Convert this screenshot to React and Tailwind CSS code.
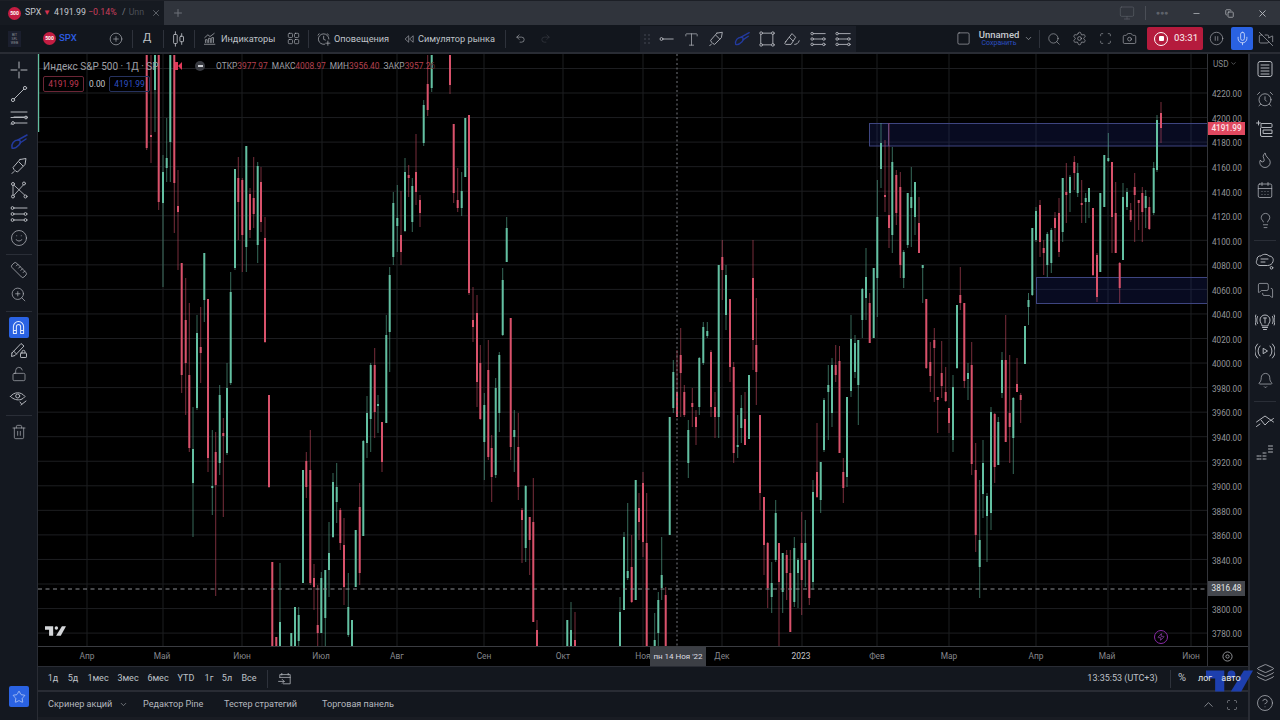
import React from "react";
import { CirclePlus, Undo2, Redo2, Type, Square, Search, Settings, Scan, Camera, Mic, VideoOff, CirclePause, ChevronDown, ChevronUp, Smile, Ruler, ZoomIn, LockOpen, Trash2, Star, AlarmClock, Flame, CalendarDays, Lightbulb, MessagesSquare, Bell, Layers, CircleHelp, Minus, X, Copy, Plus, Monitor, Zap } from "lucide-react";

const G = "g", R = "r";
const CANDLES = [
[146.7,R,55,55,148,150],[151,R,55,135,137,163],[155,G,55,55,90,132],[158.7,R,55,55,202,210],[163,G,155,172,203,287],[166.7,G,118,158,168,182],[170.3,G,55,55,142,182],[174.3,R,55,55,183,233],[178,R,170,206,212,270],[181.7,R,263,263,375,393],[185.7,R,278,320,363,415],[189.3,R,303,375,448,452],[193,G,407,449,483,537],[197,G,315,333,408,410],[200.7,R,307,347,353,383],[204.3,G,253,253,300,322],[208,R,299,299,458,472],[212.3,G,430,486,487,515],[215.7,R,432,452,485,596],[219.7,G,385,395,463,475],[223.3,R,418,433,436,517],[227,G,363,388,453,455],[230.7,G,272,292,383,385],
[235,G,169,169,268,270],[238.3,R,157,178,202,240],[242.3,R,178,180,235,272],[246.3,G,146,146,247,272],[250,R,188,194,230,238],[253.7,R,157,198,214,228],[257.7,G,162,166,245,263],[261,R,167,182,222,232],[265,R,217,238,342,343],[269,R,395,395,487,488],[272.3,R,562,562,646,646],[276.3,R,637,637,646,646],[280,G,563,622,646,646],[291.3,G,633,633,646,646],[295,G,607,607,646,646],[298.7,G,607,615,641,646],[303,G,470,470,583,583],[306.3,R,452,461,487,498],[310.3,R,430,470,583,585],[314,R,564,578,587,610],[317.7,R,585,625,633,646],[321.3,G,572,578,633,633],[325.3,G,570,570,618,646],[329,G,522,553,570,597],[333,G,473,482,537,538],[336.7,G,463,487,502,523],[340.3,R,508,510,543,550],[344,R,518,545,587,605],[348.3,G,573,607,635,637],[352,G,620,620,646,646],[355.7,G,530,530,587,587],[359.7,R,483,507,573,585],[363.3,G,440,441,536,536],[367,G,396,413,443,458],[370.7,G,363,365,419,452],[374.7,R,348,365,412,438],[378,G,395,404,406,433],[382,R,422,422,462,472],[386.3,G,315,335,423,423],[389.7,G,267,275,332,372],
[393.3,G,192,203,257,265],[397.3,G,185,218,226,252],[401,R,191,235,252,265],[405,G,158,172,231,232],[408.7,R,165,175,178,197],[412.3,G,178,186,222,232],[416,R,134,172,192,205],[420,R,195,200,213,227],[423.7,G,100,105,143,146],[427.7,R,55,84,110,116],[431.7,G,55,55,88,92],[450,R,55,55,85,94],[453.7,R,124,124,193,203],[457.7,R,168,200,208,212],[461.7,G,172,191,208,216],[465.3,G,118,118,177,177],[469,R,115,115,293,295],[473,R,287,320,327,342],[477,R,295,313,382,407],[480.3,R,345,363,419,420],[484.3,G,393,405,442,480],[488.3,R,340,370,457,460],[491.7,R,435,448,477,502],[495.7,G,378,388,475,478],[499.3,G,352,355,413,432],[502.7,G,268,280,335,336],[506.7,G,217,228,262,262],[510.7,R,318,318,447,460],[514.3,G,410,430,437,472],[518.3,R,413,447,487,500],[522,R,508,510,520,563],[525.7,G,485,486,548,562],[529.7,R,517,517,540,575],[533.3,R,478,522,622,622],[537,R,620,630,646,646],[567.3,G,620,620,646,646],[571,G,602,630,646,646],[575,R,612,640,646,646],[620,G,597,612,646,646],[624,G,532,537,610,610],[627.7,G,503,571,578,580],[631.7,R,535,567,602,603],[635.7,G,480,480,600,600],[639,R,493,508,522,540],[643,R,472,483,542,557],[646.7,R,493,543,646,646],[654.7,G,613,640,646,646],[658.3,G,592,600,633,646],[661.7,G,537,575,588,600],[665.7,R,587,595,646,646],[669.7,G,417,417,535,535],[673.3,G,360,372,408,413],[677,R,350,392,417,417],[680.7,R,328,355,373,417],[684.3,R,385,392,415,417],[688.3,G,420,430,463,478],[692.3,R,388,403,407,427],[696,R,410,417,427,445],[699.3,G,357,358,407,415],[703.3,G,322,327,363,365],[707.3,G,322,331,336,338],[711,R,350,352,407,417],[715,R,392,407,417,438],[718.7,G,265,265,417,438],[722.3,R,240,257,270,300],[726,G,265,275,315,330],[730,R,299,299,367,382],[733.7,R,362,367,453,463],[737.7,G,415,445,447,458],[741.3,G,395,408,428,443],[745,R,392,419,445,445],[749,G,375,375,439,439],[753,R,240,278,340,370],[756.3,R,298,345,372,405],[760,R,415,415,493,510],[764,R,497,497,545,575],[767.7,R,542,543,588,608],[771.7,G,562,583,597,613],[775.7,G,500,513,560,562],[779,R,543,543,582,646],[782.7,G,553,553,592,613],[786.7,R,550,555,573,600],[790.3,R,550,573,632,632],[794.3,G,537,548,602,607],[798,G,558,560,573,608],[801.7,R,512,543,580,615],[805.3,G,520,543,560,587],[809.3,R,560,560,598,605],[813,G,480,492,582,590],[817,R,423,472,497,498],[820.7,G,462,462,500,513],[824,G,398,400,450,452],[828.3,G,365,385,392,440],[832,G,358,365,413,427],[835.7,R,345,365,375,382],[839.5,R,346,361,453,453],[843.3,R,458,472,488,503],[847,G,397,397,477,487],[851,G,315,339,391,397],[855,G,335,343,372,378],[858.3,G,340,340,385,425],[862.3,G,288,289,320,338],[866,G,248,277,298,320],[869.7,R,293,303,343,343],[873.7,G,268,268,338,338],[877.3,G,180,217,278,317],[881,G,123,143,169,188],[885,R,140,195,197,212],[889,R,123,215,228,248],[892.3,G,147,162,235,253],[896.3,R,170,175,213,225],[900.3,R,172,187,265,278],[903.7,G,250,252,278,288],[907.7,G,193,193,245,248],[911.3,G,167,197,208,247],[915,G,182,182,217,235],[919,R,197,223,253,253],[922.7,G,265,265,268,303],[926.3,R,299,299,368,369],[930.3,R,342,362,376,392],[934.3,R,328,340,348,402],[937.7,R,397,397,400,433],[941.7,R,341,373,386,398],[945.7,R,367,392,401,402],[949,R,408,408,423,433],[953,G,375,387,440,452],[957,G,305,305,368,369],[960.3,R,267,295,303,310],[964.3,R,303,303,381,388],[968,G,363,373,379,400],[971.7,R,342,365,464,475],[975.7,R,443,470,535,552],[979.7,G,480,540,567,598],[983,G,440,463,494,518],[987,G,493,496,516,562],[991,G,407,412,513,530],[994.7,R,413,414,467,483],[998.3,G,417,422,465,465],[1002,G,352,360,393,398],[1005.7,R,315,360,442,442],[1009.7,R,355,413,427,463],[1013.3,G,397,398,438,474],[1017,R,358,384,392,392],[1020.7,R,393,395,400,423],[1025,G,326,326,364,364],[1028.5,G,293,300,307,325],[1032.3,G,228,228,295,296],[1036,G,207,211,240,242],[1040,R,200,205,242,257],[1043.7,R,240,248,253,275],[1047.3,G,232,234,265,277],[1051.3,G,228,230,263,273],[1055,R,212,218,228,242],[1059,R,198,213,252,257],[1062.7,G,178,178,232,242],[1066.3,R,163,192,195,223],[1070,G,175,177,193,212],[1074.3,R,156,162,173,190],[1077.7,G,163,173,193,197],[1081.7,R,180,203,205,223],[1085.7,G,193,198,202,223],[1089,G,188,188,202,218],[1093,R,208,208,275,276],[1097,R,253,255,297,302],[1100.3,G,193,193,272,272],[1104.3,G,155,155,207,207],[1108.3,G,133,158,161,162],[1112,R,162,162,217,253],[1115.7,R,182,213,253,253],[1119.7,R,262,263,288,303],[1123,G,183,197,260,260],[1127,G,188,192,207,210],[1130.7,R,203,210,220,222],[1134.7,R,173,187,195,242],[1138.7,R,200,200,203,230],[1142.3,R,187,193,212,242],[1145.7,G,190,196,208,228],[1149.3,R,197,207,229,230],[1153.7,G,162,168,213,215],[1157,G,115,120,170,172],[1161,R,102,113,128,143],
];

const VLINES = [87, 163, 242, 322, 397, 484, 563, 643, 722, 802, 877, 949, 1036, 1108, 1191];
const PRICES = ["4220.00","4200.00","4180.00","4160.00","4140.00","4120.00","4100.00","4080.00","4060.00","4040.00","4020.00","4000.00","3980.00","3960.00","3940.00","3920.00","3900.00","3880.00","3860.00","3840.00","","3800.00","3780.00"];
const MONTHS = [["Апр",87],["Май",162],["Июн",242],["Июл",321],["Авг",397],["Сен",484],["Окт",563],["Ноя",643],["Дек",722],["2023",801],["Фев",877],["Мар",949],["Апр",1036],["Май",1107],["Июн",1191]];
const RANGES = [["1д",53],["5д",73],["1мес",98],["3мес",128],["6мес",158],["YTD",186],["1г",209],["5л",227],["Все",249]];

const ico = "#b3b6bc";

function Svg({ size = 20, color = ico, w = 1, children }) {
  return <svg width={size} height={size} viewBox="0 0 20 20" fill="none" stroke={color} strokeWidth={w} strokeLinecap="round" strokeLinejoin="round">{children}</svg>;
}
const Crosshair = () => <Svg><path d="M10 2v6M10 12v6M2 10h6M12 10h6" /></Svg>;
const TrendLine = ({ size }) => <Svg size={size}><circle cx="4" cy="16" r="1.6" /><circle cx="16" cy="4" r="1.6" /><path d="M5.2 14.8 14.8 5.2" /></Svg>;
const Horz = ({ size }) => <Svg size={size}><circle cx="5" cy="10" r="1.6" /><path d="M7 10h11" /></Svg>;
const FibLines = ({ size }) => <Svg size={size}><path d="M2 4h16M5 9h13M2 16h1" /><circle cx="17" cy="9.5" r="1.4" /><circle cx="4" cy="15" r="1.4" /><path d="M6 15h12M2 9.5h13" /></Svg>;
const Lines3 = ({ size }) => <Svg size={size}><circle cx="3.5" cy="4" r="1.4" /><circle cx="16.5" cy="10" r="1.4" /><circle cx="3.5" cy="16" r="1.4" /><circle cx="3.5" cy="10" r="1.4" /><circle cx="16.5" cy="16" r="1.4" /><path d="M5 4h13M5 10h10M5 16h10" /></Svg>;
const Brush = ({ size, color = "#233a9e" }) => <Svg size={size} color={color} w={1.5}><path d="M3 16c-1-4 2-8 6-8 3 0 3 3 1 5-2 2-5 4-7 3Z" /><path d="M9 8l9-5M11 11l6-4" /></Svg>;
const PenArrow = ({ size }) => <Svg size={size}><path d="M11 3.5 17 2.5l-1 6-7.5 7.5-2-1-1.5-1.5-1-2L11 3.5ZM3 17.5l2-2M10 6l4 4" /></Svg>;
const Nodes = () => <Svg><circle cx="4" cy="4" r="1.5" /><circle cx="15" cy="3.5" r="1.5" /><circle cx="4" cy="16.5" r="1.5" /><circle cx="16.5" cy="16.5" r="1.5" /><path d="M5 5.2 15.8 15.2M14.3 5 5 15.2M4 5.5v9.5" opacity=".9" /></Svg>;
const RectTool = ({ size }) => <Svg size={size}><rect x="3.5" y="3.5" width="13" height="13" /><circle cx="3.5" cy="3.5" r="1.5" fill="#1c2029" /><circle cx="16.5" cy="3.5" r="1.5" fill="#1c2029" /><circle cx="3.5" cy="16.5" r="1.5" fill="#1c2029" /><circle cx="16.5" cy="16.5" r="1.5" fill="#1c2029" /></Svg>;
const Eraser = ({ size }) => <Svg size={size}><path d="M3 13 10 4l4 4-5 8H3l-1-1 1-2ZM7 8l4 4M13 16c2 0 4-1 5-4" /></Svg>;
const Candles = () => <Svg size={18}><path d="M6 2v3M6 15v3M13 4v3M13 13v3" /><rect x="4" y="5" width="4" height="10" rx=".8" /><rect x="11" y="7" width="4" height="6" rx=".8" /></Svg>;
const IndIcon = () => <Svg size={14}><path d="M2 17.5h15M3.5 15v-4h2.5v4M8 15V9h2.5v6M12.5 15v-7H15v7M2.5 8 7 4l3 2.5L16 2" /></Svg>;
const Grid4 = () => <Svg size={13}><rect x="2" y="2" width="6.5" height="6.5" rx="1.6" /><rect x="11.5" y="2" width="6.5" height="6.5" rx="1.6" /><rect x="2" y="11.5" width="6.5" height="6.5" rx="1.6" /><rect x="11.5" y="11.5" width="6.5" height="6.5" rx="1.6" /></Svg>;
const AlarmPlus = () => <Svg size={14}><path d="M11 17.5A7.5 7.5 0 1 1 17 10M3 2.5 1.5 4.5M15 2.5 16.5 4.5M9.5 6v4.5l2.5 1M15.5 13v6M12.5 16h6" /></Svg>;
const Replay = () => <Svg size={12}><path d="M9 5 3.5 10 9 15ZM16.5 5 11 10l5.5 5Z" /></Svg>;
const Drag = () => <svg width="6" height="10" viewBox="0 0 6 10" fill="#4a4f59"><circle cx="1" cy="1" r=".8" /><circle cx="5" cy="1" r=".8" /><circle cx="1" cy="5" r=".8" /><circle cx="5" cy="5" r=".8" /><circle cx="1" cy="9" r=".8" /><circle cx="5" cy="9" r=".8" /></svg>;
const PencilLock = () => <Svg><path d="M3 13 12 3.5l3 2.5-9 9.5-3.5 1L3 13ZM4.5 11l3 3" /><rect x="11.5" y="13" width="6" height="4.5" rx=".6" /><path d="M13 13v-1.2a1.5 1.5 0 0 1 3 0V13" /></Svg>;
const EyeOff2 = () => <Svg><path d="M1.5 8.5C5 3.5 12 3.5 16 8.5c-1 1.4-2.4 2.4-4 3-3.5 1-7.5 0-10.500-3Z" /><circle cx="8.700" cy="8" r="2" /><path d="M12 17l5-4M11 14l1.500 2" /></Svg>;
const MagnetIcon = () => <Svg size={17} color="#e3ebfb" w={1.2}><path d="M4 17V9a6 6 0 0 1 12 0v8h-3.500V9a2.500 2.500 0 0 0-5 0v8ZM4 13.500h3.500M12.500 13.500H16" /></Svg>;
const ListBox = () => <Svg><rect x="3" y="2.500" width="14" height="15" rx="2" /><path d="M6 6h8M6 9h8M6 12h8M6 15h8" /></Svg>;
const AddList = () => <Svg><path d="M1.500 4h4M3.500 2v4" /><rect x="6" y="4.500" width="11" height="4" rx="1" /><path d="M5.500 9v7a1.500 1.500 0 0 0 1.500 1.500h10M8.500 11h8.500v3.500H8.500Z" /></Svg>;
const Cloud = () => <Svg><path d="M5 15.500C1.500 15.500 0.500 12 2 10c-.5-3 2-4.500 4-4 1.500-2 6-2.500 8 0 3 0 5 2.500 4 5.500-.5 2.500-3 4-5.500 4H5ZM6 9h7M6 12h4" /><circle cx="16.500" cy="17.800" r="1.300" /></Svg>;
const BulbWaves = () => <Svg><path d="M7 14.500c0-2-2-2.500-2-5.500a5 5 0 0 1 10 0c0 3-2 3.500-2 5.500ZM7.500 16.500h5M8.500 18.500h3M8.500 7h3M10 7v5M2.500 5.500c-1 2-1 5 0 7M.8 4c-1 3-1 7 0 10M17.500 5.500c1 2 1 5 0 7M19.200 4c1 3 1 7 0 10" /></Svg>;
const RadioP = () => <Svg><path d="M8.500 7.500 12.500 10l-4 2.500ZM5 5a7 7 0 0 0 0 10M15 5a7 7 0 0 1 0 10M2.500 3a10 10 0 0 0 0 14M17.500 3a10 10 0 0 1 0 14" /></Svg>;
const Chevrons = () => <Svg><path d="M1.500 11 10 5l8.500 6M1.500 15.500 5 13M18.500 7.500 15 10M6 9l4 5 4-4" /></Svg>;
const DotsGrid = () => <Svg><path d="M2 15h4M2 18h4M8 12h3M8 15h3M8 18h3M13.500 5h4M13.500 8h4M13.500 11h4" strokeDasharray="2 .8" /></Svg>;
const DataSwap = () => <Svg size={16}><path d="M6 3v2M14 3v2M3.500 8V4.500h13V16H8M3.500 8h13M2 13h7M6.500 10.500 9 13l-2.500 2.500" /></Svg>;

function TvLogo({ className, fill }) {
  return <svg className={className} viewBox="0 0 36 16" fill={fill}><path d="M14 0H0v6h7v10h7V0Z" /><circle cx="19.500" cy="3" r="3" /><path d="M29 0h7l-9 16h-8l10-16Z" /></svg>;
}

function Logo500() {
  return <span className="w-[13px] h-[13px] rounded-full bg-[#c41d42] text-white text-[5px] font-bold flex items-center justify-center leading-none shrink-0">500</span>;
}

const Sep = ({ className = "" }) => <span className={`w-px h-[18px] bg-[#2e323b] shrink-0 ${className}`} />;

function TabBar() {
  return (
    <div className="h-[25px] flex items-stretch bg-[#30343c] border-t border-[#1c1f26]">
      <div className="w-[164px] bg-[#161a21] flex items-center pl-[8px] text-[8.800px] text-[#c6c9cf] whitespace-nowrap">
        <Logo500 />
        <span className="ml-[4px] w-[15px]">SPX</span>
        <span className="ml-[3px] w-[7px] text-[#d8324f] text-[8px]">▼</span>
        <span className="ml-[4px] w-[31px]">4191.99</span>
        <span className="ml-[3px] w-[30px] text-[#c93f5c]">−0.14%</span>
        <span className="ml-[4px] text-[#767a82]">/</span>
        <span className="ml-[3px] w-[19px] text-[#4a4e56]">Unn</span>
        <X size={10} color="#6a6e75" className="ml-[3px]" />
      </div>
      <div className="ml-[8px] flex items-center"><Plus size={12} color="#6d7179" /></div>
      <div className="ml-auto flex items-center">
        <Monitor size={16} color="#5b5f67" strokeWidth={1} />
        <span className="w-px h-[14px] bg-[#4a4e56] ml-[10px]" />
        <span className="ml-[6px] w-[20px] text-center text-[#5e626a] text-[7px] leading-none">●●●</span>
        <Minus size={9} color="#b6b9bf" className="ml-[20px]" />
        <Copy size={9} color="#b6b9bf" className="ml-[24px]" />
        <X size={11} color="#b6b9bf" className="ml-[23px] mr-[12px]" />
      </div>
    </div>
  );
}

function TopToolbar() {
  return (
    <div className="h-[27px] bg-[#12161d] flex items-center text-[#bfc2c8] text-[9.200px] whitespace-nowrap">
      <span className="ml-[8px] w-[13px] h-[16px] bg-[#1b1f2e] text-[3.500px] leading-[4px] text-[#8d9096] flex items-center justify-center text-center shrink-0">BIT<br />SFL<br />WEB</span>
      <span className="ml-[22px]"><Logo500 /></span>
      <span className="ml-[3px] w-[17px] text-[#2d5be0] font-medium text-[9.500px]">SPX</span>
      <span className="ml-[33px]"><CirclePlus size={14} color={ico} strokeWidth={1.1} /></span>
      <Sep className="ml-[9px]" />
      <span className="ml-[10px] text-[11px] w-[9px]">Д</span>
      <Sep className="ml-[11px]" />
      <span className="ml-[6px]"><Candles /></span>
      <Sep className="ml-[6px]" />
      <span className="ml-[8px]"><IndIcon /></span>
      <span className="ml-[4px] w-[54px]">Индикаторы</span>
      <span className="ml-[12px]"><Grid4 /></span>
      <Sep className="ml-[8px]" />
      <span className="ml-[8px]"><AlarmPlus /></span>
      <span className="ml-[3px] w-[55px]">Оповещения</span>
      <span className="ml-[14px]"><Replay /></span>
      <span className="ml-[3px] w-[77px]">Симулятор рынка</span>
      <Sep className="ml-[10px]" />
      <span className="ml-[9px]"><Undo2 size={11} color={ico} strokeWidth={1.3} /></span>
      <span className="ml-[14px]"><Redo2 size={11} color="#3b3f47" strokeWidth={1.3} /></span>

      <div className="ml-[89px] w-[216px] h-[26px] mt-[1px] bg-[#1b1f28] flex items-center pl-[4px] gap-[7.400px] shrink-0">
        <Drag />
        <Horz size={18} />
        <Type size={17} color={ico} strokeWidth={1} />
        <PenArrow size={18} />
        <Brush size={18} />
        <RectTool size={18} />
        <Eraser size={18} />
        <Lines3 size={18} />
        <Lines3 size={18} />
      </div>

      <span className="ml-[100px]"><Square size={15} color={ico} strokeWidth={1} /></span>
      <div className="ml-[8px] w-[40px] flex flex-col items-center leading-none shrink-0">
        <span className="text-[9.500px] font-medium text-[#c6c9cf]">Unnamed</span>
        <span className="text-[7px] text-[#2b4fc5] mt-[1px]">Сохранить</span>
      </div>
      <ChevronDown size={9} color="#9a9da3" className="ml-[4.500px] shrink-0" />
      <Sep className="ml-[6.500px]" />
      <span className="ml-[7px]"><Search size={14} color={ico} strokeWidth={1} /></span>
      <span className="ml-[10.500px]"><Settings size={15} color={ico} strokeWidth={1} /></span>
      <span className="ml-[12px]"><Scan size={13} color={ico} strokeWidth={1} /></span>
      <span className="ml-[10px]"><Camera size={15} color={ico} strokeWidth={1} /></span>
      <div className="ml-[10.500px] w-[56px] h-[23px] rounded-[2px] bg-[#b51b3d] flex items-center pl-[7px] text-[9.500px] text-[#f0d5da] shrink-0">
        <span className="w-[14px] h-[14px] rounded-full border border-white flex items-center justify-center"><span className="w-[5px] h-[5px] bg-white rounded-[1px]" /></span>
        <span className="ml-[6px] font-medium">03:31</span>
      </div>
      <span className="ml-[5.500px]"><CirclePause size={15} color={ico} strokeWidth={1} /></span>
      <div className="ml-[7.500px] w-[22px] h-[23px] rounded-[2px] bg-[#2a62e2] flex items-center justify-center shrink-0"><Mic size={15} color="#e3ebfb" strokeWidth={1.2} /></div>
      <span className="ml-[5px]"><VideoOff size={16} color={ico} strokeWidth={1} /></span>
    </div>
  );
}

function LeftBtn({ children }) {
  return <div className="h-[24px] flex items-center justify-center">{children}</div>;
}
const LeftSep = () => <div className="h-[8px] flex items-center justify-center"><span className="w-[26px] h-px bg-[#2a2e37]" /></div>;

function LeftBar() {
  return (
    <div className="w-[37px] bg-[#141820] flex flex-col mr-px pt-[4px]">
      <LeftBtn><Crosshair /></LeftBtn>
      <LeftBtn><TrendLine /></LeftBtn>
      <LeftBtn><FibLines /></LeftBtn>
      <LeftBtn><Brush /></LeftBtn>
      <LeftBtn><PenArrow /></LeftBtn>
      <LeftBtn><Nodes /></LeftBtn>
      <LeftBtn><Lines3 /></LeftBtn>
      <LeftBtn><Smile size={18} color={ico} strokeWidth={1} /></LeftBtn>
      <LeftSep />
      <LeftBtn><Ruler size={18} color={ico} strokeWidth={1} /></LeftBtn>
      <LeftBtn><ZoomIn size={17} color={ico} strokeWidth={1} /></LeftBtn>
      <div className="h-[10px] flex items-center justify-center"><span className="w-[26px] h-px bg-[#2a2e37]" /></div>
      <div className="h-[22px] flex items-center justify-center"><div className="w-[20px] h-[21px] rounded-[2px] bg-[#2a62e2] flex items-center justify-center"><MagnetIcon /></div></div>
      <LeftBtn><PencilLock /></LeftBtn>
      <LeftBtn><LockOpen size={16} color={ico} strokeWidth={1} /></LeftBtn>
      <LeftBtn><EyeOff2 /></LeftBtn>
      <div className="h-[10px] flex items-center justify-center"><span className="w-[26px] h-px bg-[#2a2e37]" /></div>
      <LeftBtn><Trash2 size={16} color={ico} strokeWidth={1} /></LeftBtn>
      <div className="mt-auto mb-[13px] mx-auto w-[20px] h-[21px] rounded-[2px] bg-[#2a62e2] flex items-center justify-center"><Star size={14} color="#d7e2fa" strokeWidth={1.1} /></div>
    </div>
  );
}

function RightBtn({ children }) {
  return <div className="h-[30.200px] flex items-center justify-center">{children}</div>;
}
const RightSep = () => <div className="h-[10px] flex items-center justify-center"><span className="w-[22px] h-px bg-[#2a2e37]" /></div>;

function RightBar() {
  return (
    <div className="flex-1 bg-[#141820] flex flex-col ml-[2px]">
      <RightBtn><ListBox /></RightBtn>
      <RightBtn><AlarmClock size={18} color={ico} strokeWidth={1} /></RightBtn>
      <RightBtn><AddList /></RightBtn>
      <RightBtn><Flame size={18} color={ico} strokeWidth={1} /></RightBtn>
      <RightBtn><CalendarDays size={18} color={ico} strokeWidth={1} /></RightBtn>
      <RightBtn><Lightbulb size={17} color={ico} strokeWidth={1} /></RightBtn>
      <RightSep />
      <RightBtn><Cloud /></RightBtn>
      <RightBtn><MessagesSquare size={17} color={ico} strokeWidth={1} /></RightBtn>
      <RightBtn><BulbWaves /></RightBtn>
      <RightBtn><RadioP /></RightBtn>
      <RightBtn><Bell size={17} color={ico} strokeWidth={1} /></RightBtn>
      <RightSep />
      <RightBtn><Chevrons /></RightBtn>
      <RightBtn><DotsGrid /></RightBtn>
      <div className="mt-auto mb-[2px]">
        <RightBtn><Layers size={19} color={ico} strokeWidth={1} /></RightBtn>
        <RightBtn><CircleHelp size={18} color={ico} strokeWidth={1} /></RightBtn>
      </div>
    </div>
  );
}

function ChartSvg() {
  const green = "#63c0a2";
  const red = "#d9526b";
  return (
    <svg className="absolute inset-0" width="1169" height="592" viewBox="38 54 1169 592">
      {PRICES.map((_, i) => <line key={i} x1="38" x2="1207" y1={93 + i * 24.55} y2={93 + i * 24.55} stroke="#1d1e21" strokeWidth="1" />)}
      <line x1="38" x2="1207" y1="68.500" y2="68.500" stroke="#1d1e21" />
      {VLINES.map((x) => <line key={x} x1={x} x2={x} y1="54" y2="646" stroke="#1d1e21" strokeWidth="1" />)}
      <rect x="869.500" y="123.500" width="338" height="22.500" fill="#1d2a80" fillOpacity="0.26" stroke="#3e4580" strokeWidth="1" />
      <rect x="1036.500" y="277.500" width="171" height="26" fill="#1d2a80" fillOpacity="0.26" stroke="#3e4580" strokeWidth="1" />
      <line x1="888.500" x2="888.500" y1="123" y2="146" stroke="#3e4580" />
      <rect x="37" y="54" width="2.200" height="78" fill={green} />
      {CANDLES.map(([x, c, wt, bt, bb, wb]) => (
        <g key={x} fill={c === G ? green : red}>
          <rect x={x - 0.5} y={wt} width="1" height={wb - wt} opacity="0.55" />
          <rect x={x - 1} y={bt} width="2" height={Math.max(bb - bt, 2)} />
        </g>
      ))}
      <line x1="38" x2="1207" y1="589" y2="589" stroke="#8a8d92" strokeWidth="1" strokeDasharray="4 3.500" />
      <line x1="677" x2="677" y1="54" y2="646" stroke="#74777c" strokeWidth="1" strokeDasharray="2 2.500" />
    </svg>
  );
}

function ChartLegend() {
  return (
    <div className="absolute left-[5px] top-[5px] text-[#9d9fa4]">
      <div className="flex items-center h-[14px] whitespace-nowrap">
        <span className="text-[10px] w-[118px]">Индекс S&amp;P 500 · 1Д · SP</span>
        <span className="ml-[14px] w-[3px] h-[8px] bg-[#e23a5a]" />
        <span className="w-0 h-0 border-y-[4px] border-y-transparent border-r-[4px] border-r-[#e23a5a]" />
        <span className="ml-[13px] w-[10px] h-[10px] rounded-full bg-[#3a3c42] flex items-center justify-center"><span className="w-[5px] h-[2px] bg-[#d0d2d6]" /></span>
        <span className="ml-[11px] text-[8.400px] flex gap-[4px]">
          <span>ОТКР<span className="text-[#b5404f]">3977.97</span></span>
          <span>МАКС<span className="text-[#b5404f]">4008.97</span></span>
          <span>МИН<span className="text-[#b5404f]">3956.40</span></span>
          <span>ЗАКР<span className="text-[#b5404f]">3957.2</span><span className="text-[#5a2a32]">6</span></span>
        </span>
      </div>
      <div className="flex items-center mt-[3px] text-[8.400px]">
        <span className="w-[41px] h-[16px] border border-[#6b2636] rounded-[2px] flex items-center justify-center text-[#c23a56]">4191.99</span>
        <span className="ml-[5px] text-[#c4c6ca] w-[20px]">0.00</span>
        <span className="w-[41px] h-[16px] border border-[#26325e] rounded-[2px] flex items-center justify-center text-[#2f50c4]">4191.99</span>
      </div>
    </div>
  );
}

function PriceAxis() {
  return (
    <div className="w-[41px] relative bg-black border-l border-[#33353a] text-[8.200px] text-[#93959a] shrink-0">
      <div className="h-[26.700px] mb-[1.500px] flex items-start pt-[4px] pl-[5px] text-[#87898e]">USD<ChevronDown size={7} className="ml-[1px] mt-[2px]" /></div>
      {PRICES.map((p, i) => <div key={i} className="h-[24.550px] flex items-center pl-[4px]">{p}</div>)}
      <div className="absolute left-0 top-[68px] w-[37px] h-[13px] bg-[#e0485f] text-[#fbe3e7] font-medium flex items-center justify-center">4191.99</div>
      <div className="absolute left-0 top-[527px] w-[37px] h-[15px] bg-[#44474d] text-[#e6e7e9] flex items-center justify-center">3816.48</div>
    </div>
  );
}

function TimeAxis() {
  return (
    <div className="h-[20px] flex bg-black border-t border-[#3a3c41]">
      <div className="w-[1169px] relative flex items-center text-[8.400px] text-[#85878c] shrink-0 overflow-hidden">
        {MONTHS.map(([m, x], i) => {
          const prev = i === 0 ? 38 : MONTHS[i - 1][1] + 15;
          return <span key={i} className={m === "2023" ? "w-[30px] text-center shrink-0 text-[#c4c6ca]" : "w-[30px] text-center shrink-0"} style={{ marginLeft: x - 15 - prev }}>{m}</span>;
        })}
        <span className="absolute left-[612px] top-0 w-[56px] h-[19px] bg-[#3c3f45] text-[#dcdde0] text-[8px] flex items-center justify-center whitespace-nowrap">пн 14 Ноя '22</span>
      </div>
      <div className="flex-1 border-l border-[#33353a] flex items-center justify-center pr-[1px]">
        <svg width="11" height="11" viewBox="0 0 12 12" fill="none" stroke="#9a9ca1" strokeWidth="1"><circle cx="6" cy="6" r="5" /><circle cx="6" cy="6" r="1.800" /></svg>
      </div>
    </div>
  );
}

function RangeBar() {
  return (
    <div className="h-[23px] mt-px bg-[#13171e] flex items-center text-[9px] text-[#bfc2c8] whitespace-nowrap relative">
      {RANGES.map(([t, x], i) => {
        const prev = i === 0 ? 38 : RANGES[i - 1][1] + 12;
        return <span key={t} className="w-[24px] text-center shrink-0" style={{ marginLeft: x - 12 - prev }}>{t}</span>;
      })}
      <Sep className="ml-[6px]" />
      <span className="ml-[9px]"><DataSwap /></span>
      <span className="ml-auto w-[73px] text-center relative z-10">13:35:53 (UTC+3)</span>
      <Sep className="ml-[10.500px]" />
      <span className="ml-[6.500px] w-[10px] text-center text-[11px] relative z-10">%</span>
      <span className="ml-[10px] w-[16px] text-center relative z-10 text-[#e5e7ea]">лог</span>
      <span className="ml-[8px] w-[20px] text-center mr-[7px] relative z-10 text-[#e5e7ea]">авто</span>
    </div>
  );
}

function BottomBar() {
  return (
    <div className="h-[25px] mt-[2px] bg-[#13171e] flex items-center text-[9.100px] text-[#b5b8be] whitespace-nowrap">
      <span className="ml-[10px] w-[66px]">Скринер акций</span>
      <ChevronDown size={9} color="#8a8d93" className="ml-[4.500px]" />
      <span className="ml-[15.500px] w-[61px]">Редактор Pine</span>
      <span className="ml-[20px] w-[77px]">Тестер стратегий</span>
      <span className="ml-[21px]">Торговая панель</span>
      <span className="ml-auto"><ChevronUp size={15} color={ico} strokeWidth={1.100} /></span>
      <span className="ml-[10px] mr-[10px]"><Scan size={12} color={ico} strokeWidth={1.100} /></span>
    </div>
  );
}

export default function App() {
  return (
    <div className="w-[1280px] h-[720px] relative overflow-hidden bg-[#292c34] flex flex-col font-['Roboto',sans-serif]">
      <TabBar />
      <TopToolbar />
      <div className="flex flex-1 mt-[2px] min-h-0">
        <LeftBar />
        <div className="w-[1210px] flex flex-col shrink-0">
          <div className="h-[592px] flex">
            <div className="w-[1169px] relative bg-black overflow-hidden shrink-0">
              <ChartSvg />
              <ChartLegend />
              <TvLogo className="absolute left-[7px] top-[572px] w-[21px] h-[10px]" fill="#d5d7da" />
              <span className="absolute left-[1116px] top-[576px] w-[14px] h-[14px] rounded-full border border-[#8a2aa8] flex items-center justify-center"><Zap size={8} color="#a04cc0" /></span>
            </div>
            <PriceAxis />
          </div>
          <TimeAxis />
          <RangeBar />
          <BottomBar />
          <div className="flex-1 bg-[#191c23]" />
        </div>
        <RightBar />
      </div>
      <TvLogo className="absolute left-[1206px] top-[669px] w-[47px] h-[24px]" fill="#1d3fae" />
    </div>
  );
}
